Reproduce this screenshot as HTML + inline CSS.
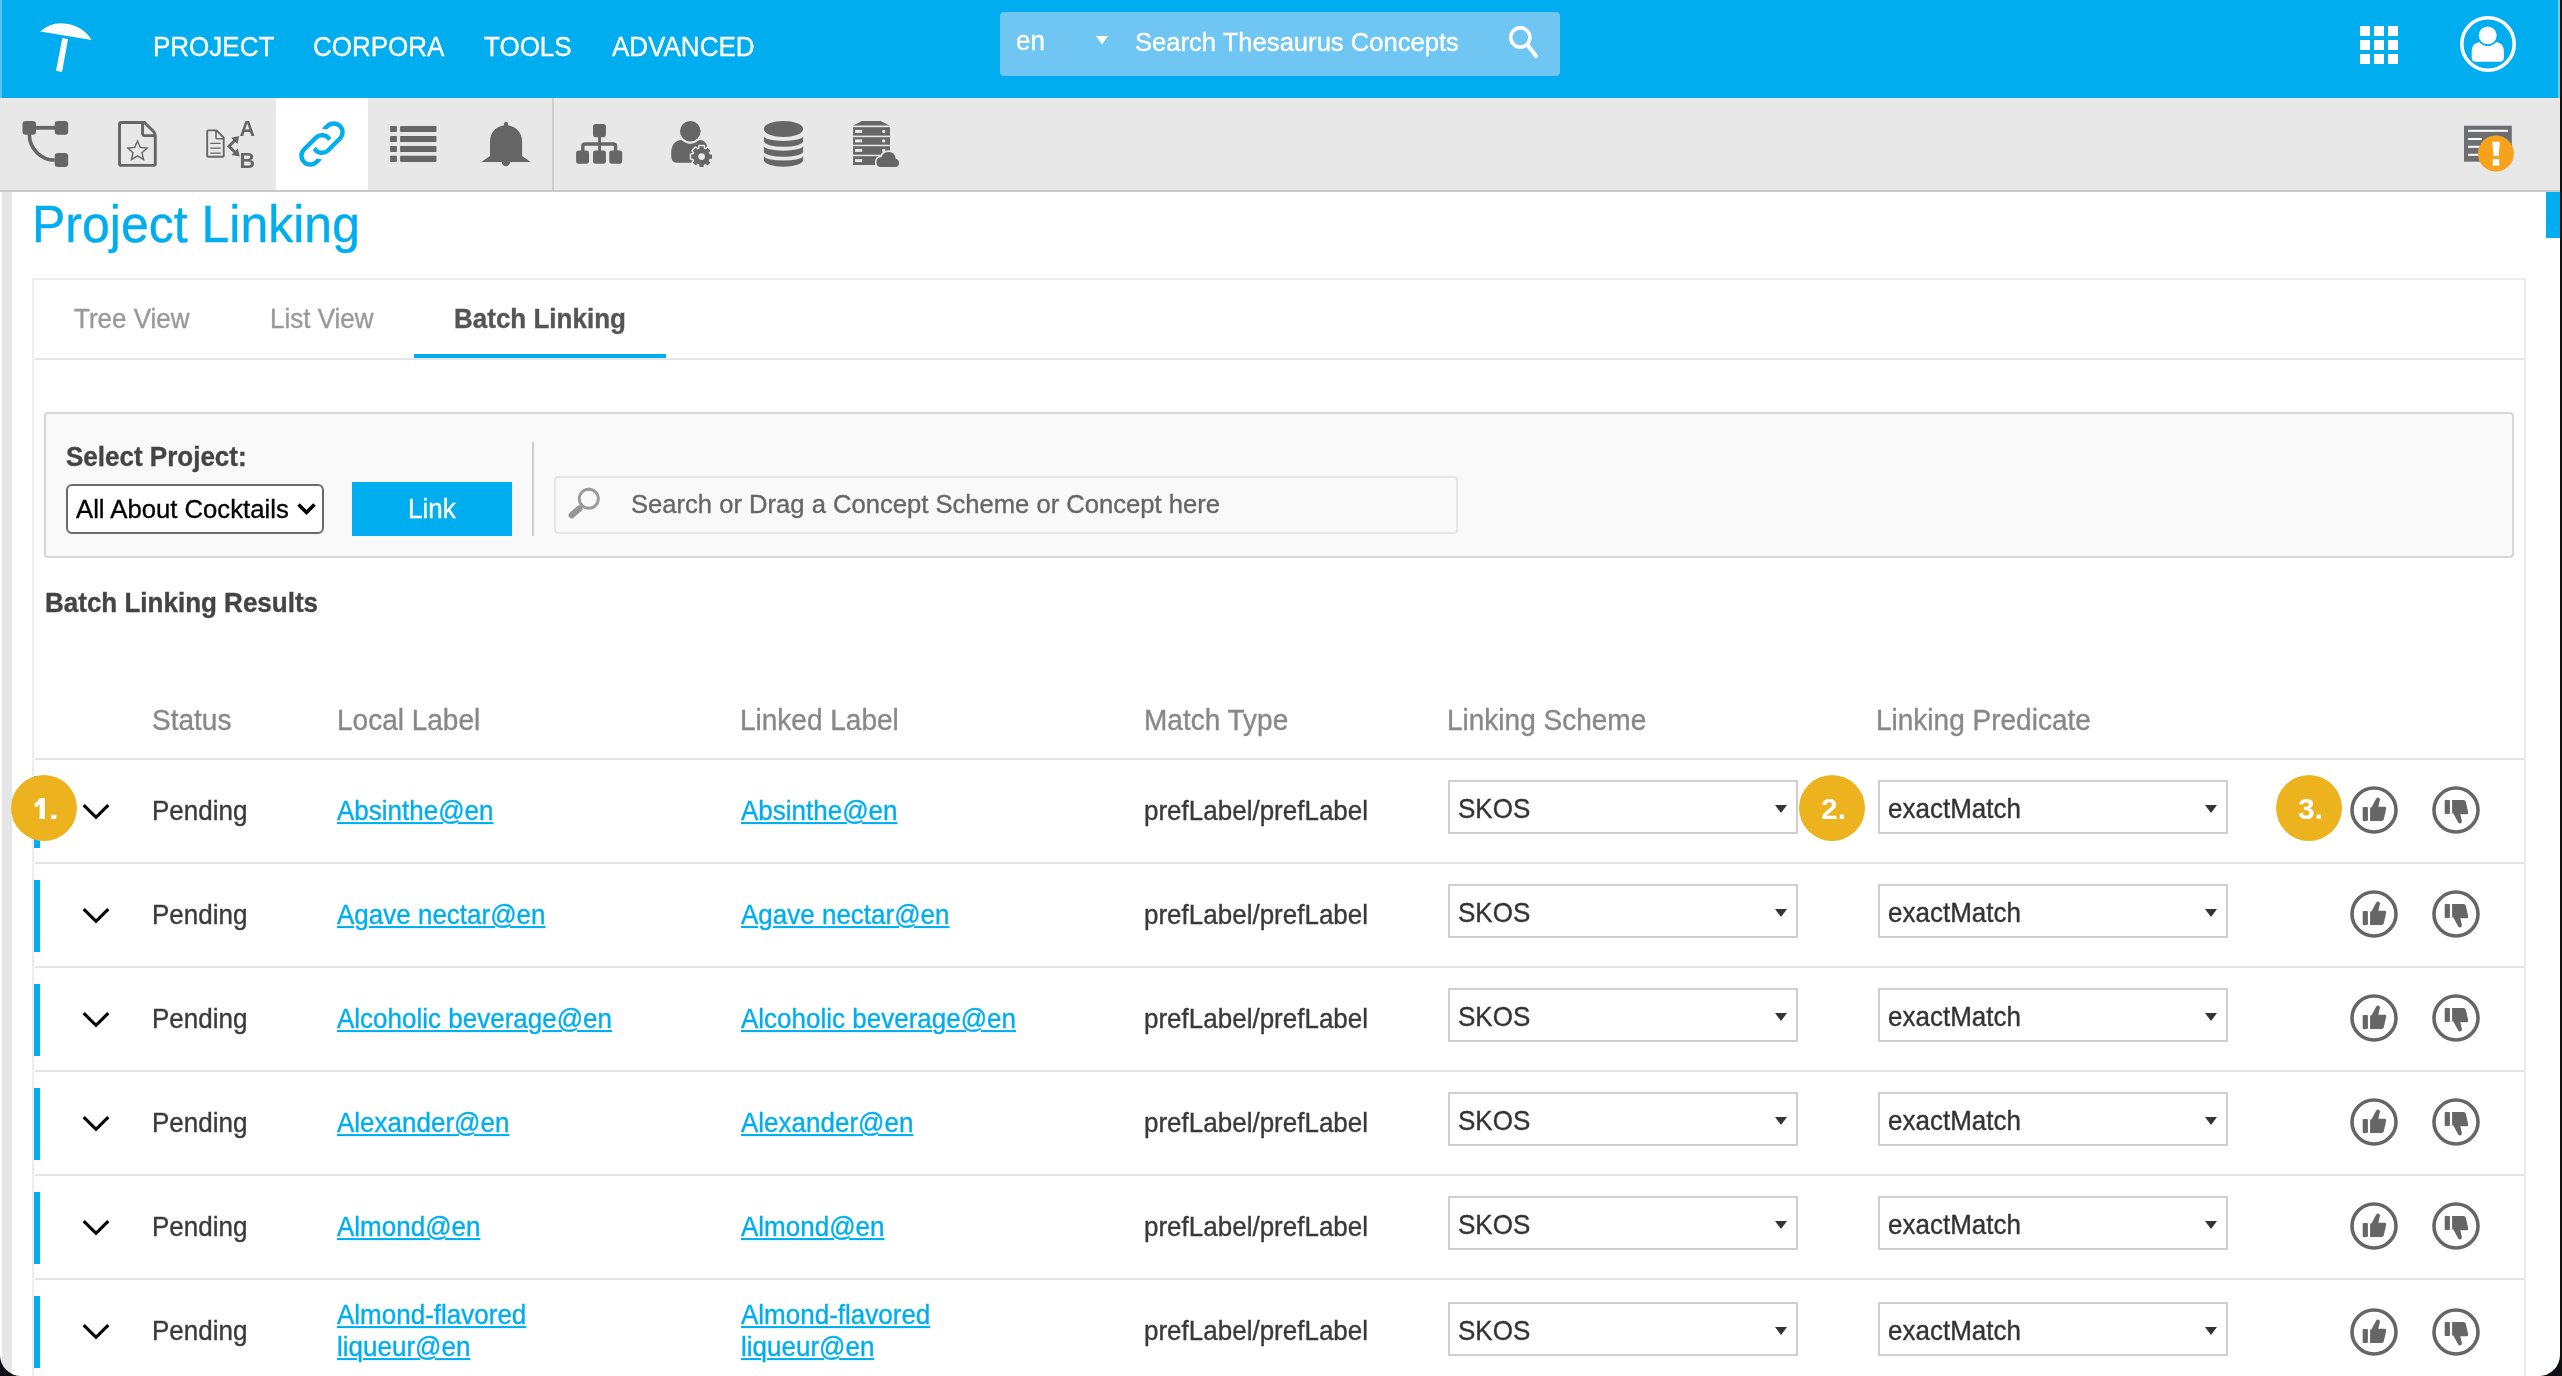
<!DOCTYPE html>
<html><head><meta charset="utf-8">
<style>
*{margin:0;padding:0;box-sizing:border-box}
html,body{width:2562px;height:1376px;overflow:hidden;background:#fff;font-family:"Liberation Sans",sans-serif}
body{will-change:transform}
.a{position:absolute}
.t{position:absolute;white-space:nowrap;line-height:1;transform:scaleY(1.03);transform-origin:0 0.8465em;-webkit-text-stroke:0.35px currentColor}
#hdr{left:0;top:0;width:2562px;height:98px;background:#00adef}
.nav{font-size:26px;color:#fff;top:34px}
#tb{left:0;top:98px;width:2562px;height:92px;background:#e8e8e8}
#tbline{left:0;top:190px;width:2562px;height:2px;background:#c9c9c9}
.rl{position:absolute;left:35px;width:2489px;height:2px;background:#e5e5e5}
.bb{position:absolute;left:34px;width:6px;height:72px;background:#00adef}
.chev{position:absolute;left:80px;width:32px;height:20px}
.chev path{fill:none;stroke:#000;stroke-width:3.2}
.rt{font-size:26px;color:#3a3a3a}
.lk{font-size:26px;color:#00aeef;text-decoration:underline;text-decoration-thickness:2px;text-underline-offset:2px}
.sel{position:absolute;width:350px;height:54px;border:2px solid #cfcfcf;background:#fff}
.sel span{position:absolute;left:8px;top:14px;font-size:26px;line-height:1;color:#333;white-space:nowrap;transform:scaleY(1.03);transform-origin:0 0.8465em;-webkit-text-stroke:0.35px currentColor}
.sel i{position:absolute;left:325px;top:23px;width:0;height:0;border-left:6.5px solid transparent;border-right:6.5px solid transparent;border-top:8px solid #333}
.th{position:absolute;width:48px;height:48px}
.ann{position:absolute;top:775px;width:66px;height:66px;border-radius:50%;background:#ecb31f;color:#fff;font-weight:bold;font-size:30px;line-height:68px;text-align:center;padding-left:3px}
svg{position:absolute;overflow:visible}
.g{fill:#666}
</style></head><body>
<svg width="0" height="0" style="left:0;top:0">
<defs>
<g id="tu"><circle cx="24" cy="24" r="22" fill="none" stroke="#666" stroke-width="3.6"/>
<g fill="#666" transform="translate(24,24)"><rect x="-11.3" y="-3.1" width="5.2" height="14" rx="0.8"/>
<path d="M-3.9 -2.4 L-2.6 -2.6 L2.2 -11.4 Q3.6 -13.4 5.4 -11.8 Q6.2 -11 5.8 -9.6 L4.3 -3.2 L10.6 -3.2 Q12.6 -3.2 12.2 -1.2 L9.8 9.2 Q9.3 10.9 7.6 10.9 L-3.9 10.9 Z"/></g></g>
<g id="td"><circle cx="24" cy="24" r="22" fill="none" stroke="#666" stroke-width="3.6"/>
<g fill="#666" transform="translate(24,25) scale(1,-1)"><rect x="-11.3" y="-3.1" width="5.2" height="14" rx="0.8"/>
<path d="M-3.9 -2.4 L-2.6 -2.6 L2.2 -11.4 Q3.6 -13.4 5.4 -11.8 Q6.2 -11 5.8 -9.6 L4.3 -3.2 L10.6 -3.2 Q12.6 -3.2 12.2 -1.2 L9.8 9.2 Q9.3 10.9 7.6 10.9 L-3.9 10.9 Z"/></g></g>
</defs></svg>
<!-- header -->
<div id="hdr" class="a"></div>
<div class="a" style="left:0;top:0;width:2px;height:98px;background:#5fc0f1"></div>
<svg style="left:0;top:0" width="100" height="98">
  <path fill="#fff" d="M40.2 31.6 Q 52 22 63.6 23.6 Q 82 25 91.7 40 Z"/>
  <path fill="#fff" d="M62.3 38.1 L68 39.2 L62 71.9 L56 70.8 Z"/>
</svg>
<div class="t nav" style="left:153px">PROJECT</div>
<div class="t nav" style="left:313px">CORPORA</div>
<div class="t nav" style="left:484px">TOOLS</div>
<div class="t nav" style="left:612px">ADVANCED</div>
<div class="a" style="left:1000px;top:12px;width:560px;height:64px;background:#6fc6f3;border-radius:4px"></div>
<div class="t" style="left:1016px;top:28px;font-size:26px;color:#fff">en</div>
<svg style="left:1096px;top:36px" width="12" height="9"><path fill="#fff" d="M0 0H12L6 8.5Z"/></svg>
<div class="t" style="left:1135px;top:30px;font-size:25.6px;color:#fff">Search Thesaurus Concepts</div>
<svg style="left:1500px;top:20px" width="45" height="45">
  <circle cx="20.3" cy="17.5" r="9.6" fill="none" stroke="#fff" stroke-width="3.6"/>
  <path d="M27.5 25 L36 36" stroke="#fff" stroke-width="4" stroke-linecap="round"/>
</svg>
<svg style="left:2360px;top:26px" width="40" height="40" fill="#fff">
  <rect x="0" y="0" width="10" height="10"/><rect x="14" y="0" width="10" height="10"/><rect x="28" y="0" width="10" height="10"/>
  <rect x="0" y="14" width="10" height="10"/><rect x="14" y="14" width="10" height="10"/><rect x="28" y="14" width="10" height="10"/>
  <rect x="0" y="28" width="10" height="10"/><rect x="14" y="28" width="10" height="10"/><rect x="28" y="28" width="10" height="10"/>
</svg>
<svg style="left:2456px;top:12px" width="64" height="64">
  <circle cx="32" cy="32" r="26.2" fill="none" stroke="#fff" stroke-width="3.6"/>
  <path fill="#fff" d="M15.7 45.6 V40 Q15.7 29.8 26.5 29.8 H37.1 Q47.9 29.8 47.9 40 V45.6 Q47.9 49.8 43.7 49.8 H19.9 Q15.7 49.8 15.7 45.6 Z"/>
  <circle cx="31.7" cy="23.4" r="10.7" fill="#00adef"/>
  <circle cx="31.7" cy="23.4" r="8.9" fill="#fff"/>
</svg>

<!-- toolbar -->
<div id="tb" class="a"></div>
<div id="tbline" class="a"></div>
<div class="a" style="left:276px;top:98px;width:92px;height:92px;background:#fff"></div>
<div class="a" style="left:552px;top:98px;width:2px;height:92px;background:#cfcfcf"></div>

<!--ICONS-->
<svg style="left:0;top:98px" width="950" height="92" viewBox="0 98 950 92">
<g fill="#666"><rect x="22.5" y="121" width="13.5" height="13.8" rx="3"/><rect x="54.7" y="121" width="13.5" height="13.8" rx="3"/><rect x="54.7" y="153.1" width="13.5" height="13.8" rx="3"/><rect x="35" y="125.9" width="20" height="3.8"/></g>
<path d="M29.3 134 A25.4 26 0 0 0 54.7 160" fill="none" stroke="#666" stroke-width="3.6"/>
<path d="M119.5 124.5 Q119.5 122.5 121.5 122.5 L144.5 122.5 L153.3 131.3 Q155.3 133.3 155.3 136 L155.3 163.4 Q155.3 165.4 153.3 165.4 L121.5 165.4 Q119.5 165.4 119.5 163.4 Z" fill="none" stroke="#666" stroke-width="2.9"/>
<path d="M142.6 122.5 V133.6 Q142.6 135.6 144.6 135.6 H155.3" fill="none" stroke="#666" stroke-width="2.9"/>
<polygon points="137.50,141.00 140.26,147.40 147.20,148.05 141.97,152.65 143.50,159.45 137.50,155.90 131.50,159.45 133.03,152.65 127.80,148.05 134.74,147.40" fill="none" stroke="#666" stroke-width="1.4" stroke-linejoin="miter"/>
<path d="M207.2 131.4 Q207.2 130.4 208.2 130.4 L216.5 130.4 L223.7 137.6 L223.7 155.8 Q223.7 156.8 222.7 156.8 L208.2 156.8 Q207.2 156.8 207.2 155.8 Z" fill="none" stroke="#666" stroke-width="1.9"/>
<path d="M216 130.4 V137.7 Q216 138.7 217 138.7 H223.7" fill="none" stroke="#666" stroke-width="1.6"/>
<path d="M210.3 143.4 H220.6 M210.3 148.2 H220.6 M210.3 153.1 H220.6" stroke="#666" stroke-width="1.3"/>
<path d="M236 139.2 L229 146.2 L236 153.2" fill="none" stroke="#666" stroke-width="2.9"/>
<polygon points="239.2,136 231.2,137.7 237.5,144" fill="#666"/>
<polygon points="239.8,156.6 237.8,148.6 231.5,154.9" fill="#666"/>
<text x="239.6" y="135.9" font-family="Liberation Sans" font-weight="bold" font-size="21.5" fill="#666">A</text>
<text x="239.6" y="167.8" font-family="Liberation Sans" font-weight="bold" font-size="21.5" fill="#666">B</text>
<g transform="translate(322,144) rotate(-45)" fill="#00aeef">
<path d="M10.9 -11 L16.6 -11 A11 11 0 0 1 16.6 11 L0 11 A11 11 0 0 1 -10.76 -2.3 L-6.19 -2.3 A6.6 6.6 0 0 0 0 6.6 L16.6 6.6 A6.6 6.6 0 0 0 16.6 -6.6 L13.8 -6.6 Z"/>
<path d="M-10.9 11 L-16.6 11 A11 11 0 0 1 -16.6 -11 L0 -11 A11 11 0 0 1 10.76 2.3 L6.19 2.3 A6.6 6.6 0 0 0 0 -6.6 L-16.6 -6.6 A6.6 6.6 0 0 0 -16.6 6.6 L-13.8 6.6 Z"/>
</g>
<g fill="#666">
<rect x="390.1" y="125.9" width="6.8" height="6.2" rx="0.8"/><rect x="400.1" y="125.9" width="36.4" height="6.2" rx="0.8"/>
<rect x="390.1" y="135.9" width="6.8" height="6.2" rx="0.8"/><rect x="400.1" y="135.9" width="36.4" height="6.2" rx="0.8"/>
<rect x="390.1" y="145.9" width="6.8" height="6.2" rx="0.8"/><rect x="400.1" y="145.9" width="36.4" height="6.2" rx="0.8"/>
<rect x="390.1" y="155.7" width="6.8" height="6.2" rx="0.8"/><rect x="400.1" y="155.7" width="36.4" height="6.2" rx="0.8"/>
</g>
<g fill="#666"><rect x="504" y="121.8" width="4" height="6" rx="2"/>
<path d="M490 156 V141.5 C490 131.5 497.5 125.3 506 125.3 C514.5 125.3 522.1 131.5 522.1 141.5 V156 L530.6 161.9 H481.3 Z"/>
<path d="M501.8 161.9 A4.1 4.3 0 0 0 510 161.9 Z"/></g>
<g fill="#666"><rect x="593" y="124" width="12.9" height="13.2" rx="2.6"/>
<rect x="576.1" y="150.6" width="12.9" height="13.1" rx="2.6"/>
<rect x="593" y="150.6" width="12.9" height="13.1" rx="2.6"/>
<rect x="609.3" y="150.6" width="12.9" height="13.1" rx="2.6"/>
<rect x="598.1" y="136" width="2.9" height="15"/></g>
<path d="M582.8 151 V146.5 Q582.8 144 585.3 144 H613.1 Q615.6 144 615.6 146.5 V151" fill="none" stroke="#666" stroke-width="3.4"/>
<path d="M671.2 156.5 V153 C671.2 145 675.5 140 681.5 140 C685 140 687 143.2 690.3 143.2 C693.6 143.2 696 140 699.5 140 C705 140 707.5 144.5 707.5 149 V156.5 Q707.5 162.8 701.5 162.8 H677.5 Q671.2 162.8 671.2 156.5 Z" fill="#666"/>
<circle cx="690.3" cy="131.25" r="12.4" fill="#e8e8e8"/><circle cx="690.3" cy="131.25" r="10.3" fill="#666"/>
<polygon points="709.63,154.52 712.00,154.55 712.00,158.65 709.63,158.68 708.75,160.81 710.41,162.50 707.50,165.41 705.81,163.75 703.68,164.63 703.65,167.00 699.55,167.00 699.52,164.63 697.39,163.75 695.70,165.41 692.79,162.50 694.45,160.81 693.57,158.68 691.20,158.65 691.20,154.55 693.57,154.52 694.45,152.39 692.79,150.70 695.70,147.79 697.39,149.45 699.52,148.57 699.55,146.20 703.65,146.20 703.68,148.57 705.81,149.45 707.50,147.79 710.41,150.70 708.75,152.39" fill="#666" stroke="#e8e8e8" stroke-width="3" stroke-linejoin="round"/><polygon points="709.63,154.52 712.00,154.55 712.00,158.65 709.63,158.68 708.75,160.81 710.41,162.50 707.50,165.41 705.81,163.75 703.68,164.63 703.65,167.00 699.55,167.00 699.52,164.63 697.39,163.75 695.70,165.41 692.79,162.50 694.45,160.81 693.57,158.68 691.20,158.65 691.20,154.55 693.57,154.52 694.45,152.39 692.79,150.70 695.70,147.79 697.39,149.45 699.52,148.57 699.55,146.20 703.65,146.20 703.68,148.57 705.81,149.45 707.50,147.79 710.41,150.70 708.75,152.39" fill="#666"/>
<circle cx="701.6" cy="156.6" r="3.4" fill="#e8e8e8"/>
<ellipse cx="783.5" cy="128.95" rx="19.6" ry="8.05" fill="#666"/><path fill="#666" d="M763.9 136.3 A19.6 4.60 0 0 0 803.1 136.3 V141.3 A19.6 5.50 0 0 1 763.9 141.3 Z"/><path fill="#666" d="M763.9 146.1 A19.6 4.60 0 0 0 803.1 146.1 V151.4 A19.6 5.30 0 0 1 763.9 151.4 Z"/><path fill="#666" d="M763.9 155.7 A19.6 4.90 0 0 0 803.1 155.7 V160.1 A19.6 6.60 0 0 1 763.9 160.1 Z"/>
<g fill="#666"><polygon points="861.9,120.9 880.6,120.9 889.7,125.6 853.1,125.6"/>
<rect x="853.1" y="127.2" width="36.9" height="8.4"/>
<rect x="853.1" y="137.2" width="36.9" height="7.5"/>
<rect x="853.1" y="146.2" width="36.9" height="8.5"/>
<rect x="853.1" y="156.2" width="36.9" height="8.8"/>
</g><g fill="#e8e8e8">
<rect x="855" y="129.9" width="7.2" height="3"/><circle cx="883.7" cy="131.4" r="1.7"/>
<rect x="855" y="139.4" width="7.2" height="3"/><circle cx="883.7" cy="140.9" r="1.7"/>
<rect x="855" y="148.9" width="7.2" height="3"/><circle cx="883.7" cy="150.4" r="1.7"/>
<rect x="855" y="159.1" width="7.2" height="3"/><circle cx="883.7" cy="160.6" r="1.7"/>
</g>
<path d="M880.5 166.9 Q876.5 166.9 876.5 162 Q876.5 157.5 881.5 157 Q883 151.9 889 151.9 Q895 151.9 895.5 158.5 Q899 159.5 899 163 Q899 166.9 895 166.9 Z" fill="#666" stroke="#e8e8e8" stroke-width="3.2"/><path d="M880.5 166.9 Q876.5 166.9 876.5 162 Q876.5 157.5 881.5 157 Q883 151.9 889 151.9 Q895 151.9 895.5 158.5 Q899 159.5 899 163 Q899 166.9 895 166.9 Z" fill="#666"/>
</svg>
<svg style="left:2440px;top:98px" width="100" height="92" viewBox="2440 98 100 92">
<rect x="2464" y="125.7" width="47.8" height="36" fill="#6d6e71"/>
<g fill="#fff"><rect x="2468" y="129.8" width="40" height="2"/><rect x="2468" y="138" width="13.7" height="2"/><rect x="2468" y="145.8" width="13.7" height="2"/><rect x="2468" y="153.8" width="13.7" height="2"/></g>
<circle cx="2495.9" cy="153.5" r="18" fill="#f7a21b"/>
<g fill="#fff"><path d="M2492.2 141.7 H2499.9 L2498.6 155.9 H2493.5 Z"/><rect x="2492.8" y="159" width="6.4" height="6.7"/></g>
</svg>
<!--/ICONS-->
<!-- content -->
<div class="a" style="left:2px;top:192px;width:10px;height:1184px;background:#e6e6e6"></div>
<div class="t" style="left:32px;top:200px;font-size:50px;color:#00adef">Project Linking</div>
<div class="a" style="left:32px;top:278px;width:2494px;height:1200px;border:2px solid #ececec"></div>
<div class="t" style="left:74px;top:306px;font-size:26px;color:#999">Tree View</div>
<div class="t" style="left:270px;top:306px;font-size:26px;color:#999">List View</div>
<div class="t" style="left:454px;top:306px;font-size:26px;color:#555;font-weight:bold">Batch Linking</div>
<div class="a" style="left:35px;top:358px;width:2489px;height:2px;background:#e6e6e6"></div>
<div class="a" style="left:414px;top:354px;width:252px;height:4px;background:#00adef"></div>

<!-- select panel -->
<div class="a" style="left:44px;top:412px;width:2470px;height:146px;background:#f9f9f9;border:2px solid #d6d6d6;border-radius:4px"></div>
<div class="t" style="left:66px;top:444px;font-size:26px;color:#444;font-weight:bold">Select Project:</div>
<div class="a" style="left:66px;top:484px;width:258px;height:50px;background:#fff;border:2px solid #6b6b6b;border-radius:6px"></div>
<div class="t" style="left:76px;top:497px;font-size:25.7px;color:#000">All About Cocktails</div>
<svg style="left:296px;top:502px" width="22" height="14"><path d="M2.5 2.5 L10.5 10.5 L18.5 2.5" fill="none" stroke="#000" stroke-width="3.6"/></svg>
<div class="a" style="left:352px;top:482px;width:160px;height:54px;background:#00adef"></div>
<div class="t" style="left:408px;top:496px;font-size:26px;color:#fff">Link</div>
<div class="a" style="left:532px;top:442px;width:2px;height:94px;background:#cccccc"></div>
<div class="a" style="left:554px;top:476px;width:904px;height:58px;background:#f9f9f9;border:2px solid #e6e6e6;border-radius:4px"></div>
<svg style="left:560px;top:480px" width="50" height="50" viewBox="560 480 50 50"><circle cx="588.8" cy="498.7" r="9.5" fill="none" stroke="#9a9a9a" stroke-width="2.9"/><path d="M579.3 508.6 L571.8 515.2" stroke="#959595" stroke-width="6.4" stroke-linecap="round"/></svg>
<div class="t" style="left:631px;top:492px;font-size:25.6px;color:#666">Search or Drag a Concept Scheme or Concept here</div>
<div class="t" style="left:45px;top:590px;font-size:26px;color:#444;font-weight:bold">Batch Linking Results</div>

<!-- table header -->
<div class="t hd" style="left:152px;top:707px;font-size:28px;color:#888">Status</div>
<div class="t hd" style="left:337px;top:707px;font-size:28px;color:#888">Local Label</div>
<div class="t hd" style="left:740px;top:707px;font-size:28px;color:#888">Linked Label</div>
<div class="t hd" style="left:1144px;top:707px;font-size:28px;color:#888">Match Type</div>
<div class="t hd" style="left:1447px;top:707px;font-size:28px;color:#888">Linking Scheme</div>
<div class="t hd" style="left:1876px;top:707px;font-size:28px;color:#888">Linking Predicate</div>

<!--ROWS-->
<div class="rl" style="top:758px"></div>
<div class="bb" style="top:776px"></div>
<svg class="chev" style="top:802px"><path d="M3.7 3.2 L16 15.3 L28.3 3.2"/></svg>
<div class="t rt" style="left:152px;top:798px">Pending</div>
<div class="t lk" style="left:337px;top:798px">Absinthe@en</div>
<div class="t lk" style="left:741px;top:798px">Absinthe@en</div>
<div class="t rt" style="left:1144px;top:798px">prefLabel/prefLabel</div>
<div class="sel" style="left:1448px;top:780px"><span>SKOS</span><i></i></div>
<div class="sel" style="left:1878px;top:780px"><span>exactMatch</span><i></i></div>
<svg class="th" style="left:2350px;top:786px"><use href="#tu"/></svg>
<svg class="th" style="left:2432px;top:786px"><use href="#td"/></svg>
<div class="rl" style="top:862px"></div>
<div class="bb" style="top:880px"></div>
<svg class="chev" style="top:906px"><path d="M3.7 3.2 L16 15.3 L28.3 3.2"/></svg>
<div class="t rt" style="left:152px;top:902px">Pending</div>
<div class="t lk" style="left:337px;top:902px">Agave nectar@en</div>
<div class="t lk" style="left:741px;top:902px">Agave nectar@en</div>
<div class="t rt" style="left:1144px;top:902px">prefLabel/prefLabel</div>
<div class="sel" style="left:1448px;top:884px"><span>SKOS</span><i></i></div>
<div class="sel" style="left:1878px;top:884px"><span>exactMatch</span><i></i></div>
<svg class="th" style="left:2350px;top:890px"><use href="#tu"/></svg>
<svg class="th" style="left:2432px;top:890px"><use href="#td"/></svg>
<div class="rl" style="top:966px"></div>
<div class="bb" style="top:984px"></div>
<svg class="chev" style="top:1010px"><path d="M3.7 3.2 L16 15.3 L28.3 3.2"/></svg>
<div class="t rt" style="left:152px;top:1006px">Pending</div>
<div class="t lk" style="left:337px;top:1006px">Alcoholic beverage@en</div>
<div class="t lk" style="left:741px;top:1006px">Alcoholic beverage@en</div>
<div class="t rt" style="left:1144px;top:1006px">prefLabel/prefLabel</div>
<div class="sel" style="left:1448px;top:988px"><span>SKOS</span><i></i></div>
<div class="sel" style="left:1878px;top:988px"><span>exactMatch</span><i></i></div>
<svg class="th" style="left:2350px;top:994px"><use href="#tu"/></svg>
<svg class="th" style="left:2432px;top:994px"><use href="#td"/></svg>
<div class="rl" style="top:1070px"></div>
<div class="bb" style="top:1088px"></div>
<svg class="chev" style="top:1114px"><path d="M3.7 3.2 L16 15.3 L28.3 3.2"/></svg>
<div class="t rt" style="left:152px;top:1110px">Pending</div>
<div class="t lk" style="left:337px;top:1110px">Alexander@en</div>
<div class="t lk" style="left:741px;top:1110px">Alexander@en</div>
<div class="t rt" style="left:1144px;top:1110px">prefLabel/prefLabel</div>
<div class="sel" style="left:1448px;top:1092px"><span>SKOS</span><i></i></div>
<div class="sel" style="left:1878px;top:1092px"><span>exactMatch</span><i></i></div>
<svg class="th" style="left:2350px;top:1098px"><use href="#tu"/></svg>
<svg class="th" style="left:2432px;top:1098px"><use href="#td"/></svg>
<div class="rl" style="top:1174px"></div>
<div class="bb" style="top:1192px"></div>
<svg class="chev" style="top:1218px"><path d="M3.7 3.2 L16 15.3 L28.3 3.2"/></svg>
<div class="t rt" style="left:152px;top:1214px">Pending</div>
<div class="t lk" style="left:337px;top:1214px">Almond@en</div>
<div class="t lk" style="left:741px;top:1214px">Almond@en</div>
<div class="t rt" style="left:1144px;top:1214px">prefLabel/prefLabel</div>
<div class="sel" style="left:1448px;top:1196px"><span>SKOS</span><i></i></div>
<div class="sel" style="left:1878px;top:1196px"><span>exactMatch</span><i></i></div>
<svg class="th" style="left:2350px;top:1202px"><use href="#tu"/></svg>
<svg class="th" style="left:2432px;top:1202px"><use href="#td"/></svg>
<div class="rl" style="top:1278px"></div>
<div class="bb" style="top:1296px"></div>
<svg class="chev" style="top:1322px"><path d="M3.7 3.2 L16 15.3 L28.3 3.2"/></svg>
<div class="t rt" style="left:152px;top:1318px">Pending</div>
<div class="t lk" style="left:337px;top:1302px">Almond-flavored</div>
<div class="t lk" style="left:337px;top:1334px">liqueur@en</div>
<div class="t lk" style="left:741px;top:1302px">Almond-flavored</div>
<div class="t lk" style="left:741px;top:1334px">liqueur@en</div>
<div class="t rt" style="left:1144px;top:1318px">prefLabel/prefLabel</div>
<div class="sel" style="left:1448px;top:1302px"><span>SKOS</span><i></i></div>
<div class="sel" style="left:1878px;top:1302px"><span>exactMatch</span><i></i></div>
<svg class="th" style="left:2350px;top:1308px"><use href="#tu"/></svg>
<svg class="th" style="left:2432px;top:1308px"><use href="#td"/></svg>
<!--/ROWS-->

<!-- annotations -->
<div class="ann" style="left:11px"></div>
<svg style="left:0;top:770px" width="80" height="80" viewBox="0 770 80 80"><path fill="#fff" d="M39.6 797.9 H44.8 V819.1 H39.6 V804.6 Q37.4 806.6 34.7 807.2 V803.4 Q38.4 801.6 39.6 797.9 Z"/><rect x="51.2" y="814.8" width="5" height="4.3" fill="#fff"/></svg>
<div class="ann" style="left:1799px">2.</div>
<div class="ann" style="left:2276px">3.</div>
<!-- window corners -->
<svg style="left:0;top:1350px" width="30" height="26"><path d="M0 5 V26 H21 A21 21 0 0 1 0 5 Z" fill="#0d0f14"/></svg>
<svg style="left:2532px;top:1350px" width="30" height="26"><path d="M30 0 V26 H7 A21 21 0 0 0 28 5 V0 Z" fill="#0d0f14"/></svg>
<!-- window edges -->
<div class="a" style="left:2558px;top:0;width:2px;height:98px;background:#6fcaf5"></div>
<div class="a" style="left:2546px;top:192px;width:14px;height:46px;background:#00adef"></div>
<div class="a" style="left:2560px;top:0;width:2px;height:1376px;background:#111"></div>
</body></html>
